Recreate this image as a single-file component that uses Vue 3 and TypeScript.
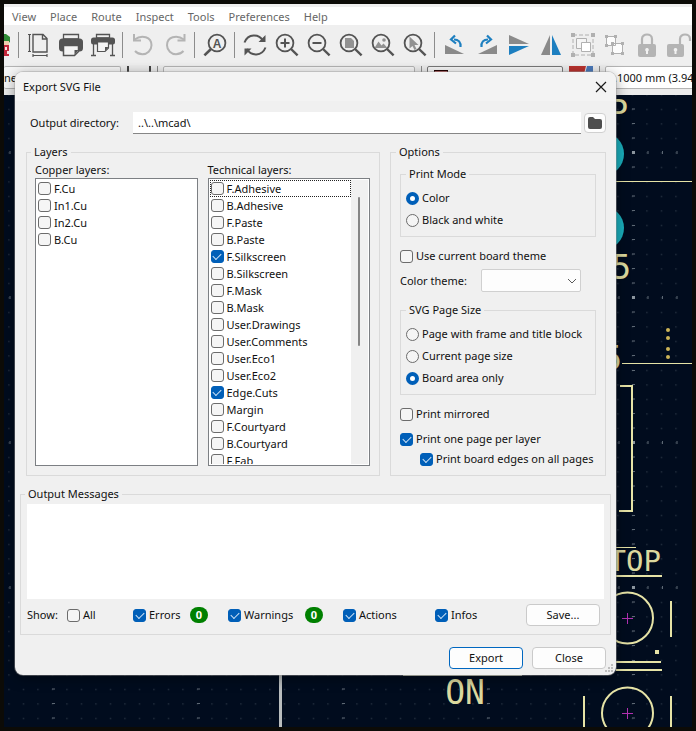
<script setup lang="ts">
import { ref } from 'vue'

interface Layer {
  name: string
  on: boolean
}

const menus = ['View', 'Place', 'Route', 'Inspect', 'Tools', 'Preferences', 'Help']

const lens =
  '<circle cx="11" cy="10" r="8.4" fill="none" stroke="#545454" stroke-width="1.8"/><path d="M17 16l6.6 6.4" stroke="#545454" stroke-width="2.4"/>'

const icons: Record<string, string> = {
  'Page settings':
    '<path d="M7 1.5h10l4 4v13.500H7zM16.500 1.500v4.500H21" fill="none" stroke="#545454" stroke-width="1.400"/><path d="M3.500 1.500v17M2 1.500h3M2 18.500h3M7 22.500h14M7 21v3M21 21v3" stroke="#545454" stroke-width="1.200"/>',
  Print:
    '<path d="M5.500 1.500h15V6h-15z" fill="#f0f0f0" stroke="#545454" stroke-width="1.300"/><rect x="1" y="5.500" width="24" height="13" rx="3.500" fill="#545454"/><path d="M5.500 12.500h15v6l-4 4h-11z" fill="#f4f4f4" stroke="#545454" stroke-width="1.500"/><path d="M20.500 17h-4v5z" fill="#545454"/>',
  Plot:
    '<path d="M6.500 1.500h13V5h-13z" fill="#f0f0f0" stroke="#545454" stroke-width="1.300"/><rect x="1" y="4.500" width="24" height="7" rx="2.500" fill="#545454"/><path d="M3.500 11v12M22.500 11v12M1 22.500h5M20 22.500h5" stroke="#545454" stroke-width="1.300"/><path d="M7.500 9h11v6l-3.500 3.500H7.500z" fill="#f4f4f4" stroke="#545454" stroke-width="1.200"/><path d="M18.500 14H15v4z" fill="#545454"/>',
  Undo:
    '<path d="M4.500 6.500C12 1 21.500 4 21.500 12.200c0 5.200-4.500 9-9 9-3.200 0-5.500-1-7.500-3.200" fill="none" stroke="#b4b4b4" stroke-width="2"/><path d="M4 1v6.500h7" fill="none" stroke="#b4b4b4" stroke-width="2"/>',
  Redo:
    '<path d="M22 6.500C14.500 1 5 4 5 12.200c0 5.200 4.500 9 9 9 3.200 0 5.500-1 7.500-3.200" fill="none" stroke="#b4b4b4" stroke-width="2"/><path d="M22.500 1v6.500h-7" fill="none" stroke="#b4b4b4" stroke-width="2"/>',
  Find:
    '<circle cx="15" cy="10" r="8.400" fill="none" stroke="#545454" stroke-width="1.800"/><path d="M9 16l-6.600 6.400" stroke="#545454" stroke-width="2.600"/><text x="15" y="14.500" text-anchor="middle" font-family="Liberation Sans, sans-serif" font-weight="bold" font-size="12" fill="#545454">A</text>',
  Refresh:
    '<path d="M2.500 9.500C6 .5 17 .5 21 8M23.500 14.500c-3.500 9-14.500 9-18.500 1.500" fill="none" stroke="#545454" stroke-width="2"/><path d="M23.500 2v7h-7zM2.500 22.500v-7h7z" fill="#545454"/>',
  'Zoom in': lens + '<path d="M6.500 10h9M11 5.500v9" stroke="#545454" stroke-width="2"/>',
  'Zoom out': lens + '<path d="M6.500 10h9" stroke="#545454" stroke-width="2"/>',
  'Zoom to page': lens + '<path d="M7 5h6l3 3v7H7z" fill="#929292"/>',
  'Zoom to objects':
    lens + '<path d="M4.500 15l4-6.500 3 4 2-2 4 4.500z" fill="#929292"/><circle cx="14" cy="7" r="1.800" fill="#929292"/>',
  'Zoom to selection': lens + '<path d="M7.500 3.500v12l3-2.500 2 4 2-1-2-4h4z" fill="#929292"/>',
  'Rotate left':
    '<path d="M3 12l19 9H3z" fill="#8a8a8a"/><path d="M18.500 14c.5-5-2-7.500-6.500-7.500" fill="none" stroke="#1d7fc0" stroke-width="2.200"/><path d="M13 2.500L9 6.500l5 4" fill="none" stroke="#1d7fc0" stroke-width="2.200"/>',
  'Rotate right':
    '<path d="M23 12v9H4z" fill="#8a8a8a"/><path d="M7.500 14C7 9 9.500 6.500 14 6.500" fill="none" stroke="#1d7fc0" stroke-width="2.200"/><path d="M13 2.500l4 4-5 4" fill="none" stroke="#1d7fc0" stroke-width="2.200"/>',
  'Flip vertically': '<path d="M3 2l20 9H3z" fill="#8a8a8a"/><path d="M3 13h20L3 22z" fill="#1d7fc0"/>',
  'Flip horizontally': '<path d="M12 2v20H3z" fill="#8a8a8a"/><path d="M14 2v20h9z" fill="#1d7fc0"/>',
  Group:
    '<rect x="3" y="2" width="20" height="20" fill="none" stroke="#b0b0b0" stroke-dasharray="4 2"/><path d="M1 0h4v4H1zM21 0h4v4h-4zM1 20h4v4H1zM21 20h4v4h-4z" fill="#b0b0b0"/><path d="M6.500 5.500h10v10h-10z" fill="#f5f5f5" stroke="#b0b0b0"/><path d="M11.500 9.500h9v9h-9z" fill="#fff" stroke="#b0b0b0"/>',
  Ungroup:
    '<path d="M4.500 3.500h9v9h-9zM10.500 10.500h10v10h-10z" fill="#fcfcfc" stroke="#b0b0b0"/><path d="M3 2h3v3H3zM12 2h3v3h-3zM3 11h3v3H3zM9 9h3v3H9zM19 9h3v3h-3zM9 19h3v3H9zM19 19h3v3h-3z" fill="#b0b0b0"/>',
  Lock:
    '<rect x="4" y="11" width="18" height="13" rx="2" fill="#b4b4b4"/><path d="M8 11V6c0-6 10-6 10 0v5" fill="none" stroke="#b4b4b4" stroke-width="2.200"/><path d="M13 15a1.800 1.800 0 011 3.300V21h-2v-2.700A1.800 1.800 0 0113 15z" fill="#f2f2f2"/>',
  Unlock:
    '<rect x="1" y="11" width="17" height="13" rx="2" fill="#b4b4b4"/><path d="M14 11V6c0-6 10-6 10 0v2" fill="none" stroke="#b4b4b4" stroke-width="2.200"/><path d="M9.500 15a1.800 1.800 0 011 3.300V21h-2v-2.700A1.800 1.800 0 019.500 15z" fill="#f2f2f2"/>',
}

const groups: string[][] = [
  ['Page settings', 'Print', 'Plot'],
  ['Undo', 'Redo'],
  ['Find'],
  ['Refresh', 'Zoom in', 'Zoom out', 'Zoom to page', 'Zoom to objects', 'Zoom to selection'],
  ['Rotate left', 'Rotate right', 'Flip vertically', 'Flip horizontally', 'Group', 'Ungroup', 'Lock', 'Unlock'],
]

const copper = ref<Layer[]>(['F.Cu', 'In1.Cu', 'In2.Cu', 'B.Cu'].map((name) => ({ name, on: false })))

const technical = ref<Layer[]>(
  [
    'F.Adhesive', 'B.Adhesive', 'F.Paste', 'B.Paste', 'F.Silkscreen', 'B.Silkscreen', 'F.Mask', 'B.Mask',
    'User.Drawings', 'User.Comments', 'User.Eco1', 'User.Eco2', 'Edge.Cuts', 'Margin', 'F.Courtyard',
    'B.Courtyard', 'F.Fab',
  ].map((name) => ({ name, on: name === 'F.Silkscreen' || name === 'Edge.Cuts' })),
)

const directory = ref('..\\..\\mcad\\')
const printMode = ref('Color')
const pageSize = ref('Board area only')
const boardTheme = ref(false)
const theme = ref('')
const mirrored = ref(false)
const onePage = ref(true)
const allEdges = ref(true)
const messages = ref('')
const show = ref({ all: false, errors: true, warnings: true, actions: true, infos: true })

const dots = [330, 338, 349, 357]
const pads = [154, 228]
const vias = [618, 713]
</script>

<template>
  <div class="app">
    <nav class="menubar">
      <button v-for="m in menus" :key="m" type="button">{{ m }}</button>
    </nav>

    <div class="toolbar">
      <svg class="cut-icon" width="6" height="24" aria-hidden="true">
        <path d="M0 1h2l4 3v5l-3 2H0z" fill="#2e8b35" />
        <path d="M0 8h5v4H0z" fill="#f0cfae" />
        <path d="M0 12h5v11H0z" fill="#c3273b" />
        <path d="M1 14h2v3H1zM3 18h2v3H3z" fill="#f6e4df" />
      </svg>
      <template v-for="(g, i) in groups" :key="i">
        <span class="sep"></span>
        <button v-for="name in g" :key="name" type="button" :aria-label="name">
          <svg width="24" height="24" viewBox="0 0 24 24" v-html="icons[name]"></svg>
        </button>
      </template>
    </div>

    <div class="subbar">
      <span class="box track">ne</span>
      <span class="ticks"></span>
      <span class="sep"></span>
      <span class="box via"></span>
      <span class="sep"></span>
      <span class="box dark"><i></i></span>
      <svg class="pair" width="24" height="20" aria-hidden="true">
        <path d="M0 0h17l-5 20H0z" fill="#b8322e" />
        <path d="M18 0h6v20H13z" fill="#4a78b8" />
      </svg>
      <span class="sep"></span>
      <span class="box grid">.1000 mm (3.94</span>
    </div>

    <main class="canvas">
      <svg width="100%" height="100%" aria-hidden="true">
        <defs>
          <pattern id="minor" x="1.5" y="0.5" width="14.5" height="14.5" patternUnits="userSpaceOnUse">
            <rect x="7" y="7" width="1" height="1" fill="#465260" />
          </pattern>
          <pattern id="major" x="-19" y="80" width="145" height="145" patternUnits="userSpaceOnUse">
            <path
              d="M71 14.500h3M71 29h3M71 43.500h3M71 58h3M71 87h3M71 101.500h3M71 116h3M71 130.500h3M71 0.500h3"
              stroke="#5d6874"
            />
            <path
              d="M14.500 71v3M29 71v3M43.500 71v3M58 71v3M87 71v3M101.500 71v3M116 71v3M130.500 71v3M0.500 71v3"
              stroke="#5d6874"
            />
            <rect x="71" y="71" width="3" height="3" fill="#8b959e" />
          </pattern>
        </defs>
        <g transform="translate(-4 -95)">
          <rect x="0" y="95" width="100%" height="100%" fill="url(#minor)" />
          <rect x="0" y="95" width="100%" height="100%" fill="url(#major)" />
          <circle v-for="y in pads" :key="y" cx="602" :cy="y" r="22" fill="#1aaebc" />
          <g fill="none" stroke="#e6e3a6" stroke-width="2">
            <path d="M616 181.500h80M622 363.500h74M616 547.500h20" stroke-width="1" />
            <path d="M620 386h12v125h-13M616 576h46M616 662h45M616 670h46M671 601v36M671 696v40M584 696v40" />
            <circle v-for="y in vias" :key="y" cx="627.500" :cy="y" r="25.500" />
          </g>
          <path
            v-for="y in vias"
            :key="'x' + y"
            :d="`M622 ${y + 0.5}h11M627.5 ${y - 5}v11`"
            stroke="#b030b0"
            stroke-width="1"
          />
          <path d="M655 650h4v4h-4z" fill="#e6e3a6" />
          <path d="M403 675h119" stroke="#b5b9aa" stroke-width="2" />
          <path d="M280.500 672v60" stroke="#b9bdbe" stroke-width="3" />
          <circle v-for="y in dots" :key="'d' + y" cx="668" :cy="y" r="2" fill="#cdb558" />
          <g class="silk">
            <text x="628" y="124" font-size="33" text-anchor="end">P</text>
            <text x="631" y="279" font-size="33" text-anchor="end">5</text>
            <text x="622" y="370" font-size="33" text-anchor="end">5</text>
            <text x="661" y="571" font-size="29" text-anchor="end">TOP</text>
            <text x="465" y="704" font-size="33" text-anchor="middle">ON</text>
          </g>
        </g>
      </svg>
    </main>

    <section class="dialog" role="dialog" aria-labelledby="title">
      <header>
        <h1 id="title">Export SVG File</h1>
        <button type="button" class="close" aria-label="Close window">
          <svg width="12" height="12"><path d="M1 1l10 10M11 1L1 11" stroke="#1a1a1a" stroke-width="1.200" /></svg>
        </button>
      </header>

      <form @submit.prevent>
        <div class="path-row">
          <label for="dir">Output directory:</label>
          <input id="dir" v-model="directory" type="text" />
          <button type="button" aria-label="Browse">
            <svg width="14" height="12">
              <path d="M0 2q0-2 2-2h3l2 2h5q2 0 2 2v6q0 2-2 2H2q-2 0-2-2z" fill="#4e4e4e" />
            </svg>
          </button>
        </div>

        <div class="panels">
          <fieldset class="layers">
            <legend>Layers</legend>
            <div class="column">
              <span class="caption">Copper layers:</span>
              <div class="list">
                <div class="rows">
                  <label v-for="l in copper" :key="l.name"><input v-model="l.on" type="checkbox" />{{ l.name }}</label>
                </div>
              </div>
            </div>
            <div class="column">
              <span class="caption">Technical layers:</span>
              <div class="list">
                <div class="rows">
                  <label v-for="(l, i) in technical" :key="l.name" :class="{ focused: i === 0 }">
                    <input v-model="l.on" type="checkbox" />{{ l.name }}
                  </label>
                </div>
                <div class="scroll"><span></span></div>
              </div>
            </div>
          </fieldset>

          <fieldset class="options">
            <legend>Options</legend>
            <fieldset class="inner">
              <legend>Print Mode</legend>
              <label v-for="m in ['Color', 'Black and white']" :key="m">
                <input v-model="printMode" type="radio" name="mode" :value="m" />{{ m }}
              </label>
            </fieldset>
            <label class="use-theme"><input v-model="boardTheme" type="checkbox" />Use current board theme</label>
            <div class="theme-row">
              <label for="theme">Color theme:</label>
              <span class="select">
                <select id="theme" v-model="theme"><option value=""></option></select>
                <svg width="10" height="6"><path d="M1 1l4 4 4-4" fill="none" stroke="#5a5a5a" /></svg>
              </span>
            </div>
            <fieldset class="inner">
              <legend>SVG Page Size</legend>
              <label v-for="p in ['Page with frame and title block', 'Current page size', 'Board area only']" :key="p">
                <input v-model="pageSize" type="radio" name="size" :value="p" />{{ p }}
              </label>
            </fieldset>
            <label class="mirror"><input v-model="mirrored" type="checkbox" />Print mirrored</label>
            <label class="one-page"><input v-model="onePage" type="checkbox" />Print one page per layer</label>
            <label class="edges"><input v-model="allEdges" type="checkbox" />Print board edges on all pages</label>
          </fieldset>
        </div>

        <fieldset class="messages">
          <legend>Output Messages</legend>
          <textarea v-model="messages" aria-label="Output Messages" readonly></textarea>
          <div class="show">
            <span>Show:</span>
            <label><input v-model="show.all" type="checkbox" />All</label>
            <label><input v-model="show.errors" type="checkbox" />Errors</label>
            <b>0</b>
            <label><input v-model="show.warnings" type="checkbox" />Warnings</label>
            <b>0</b>
            <label><input v-model="show.actions" type="checkbox" />Actions</label>
            <label><input v-model="show.infos" type="checkbox" />Infos</label>
            <button type="button" class="btn">Save...</button>
          </div>
        </fieldset>

        <footer>
          <button type="submit" class="btn primary">Export</button>
          <button type="button" class="btn">Close</button>
        </footer>
      </form>
      <svg class="grip" width="8" height="8" aria-hidden="true">
        <path d="M6 0h2v2H6zM3 3h2v2H3zM6 3h2v2H6zM0 6h2v2H0zM3 6h2v2H3zM6 6h2v2H6z" fill="#bdbdbd" />
      </svg>
    </section>
  </div>
</template>

<style>
body {
  margin: 0;
  padding: 4px;
  box-sizing: border-box;
  min-height: 100vh;
  display: flex;
  background: #0c0b07;
}
#app {
  flex: 1;
  display: flex;
  min-width: 0;
}
</style>

<style scoped>
.app {
  position: relative;
  flex: 1;
  min-width: 0;
  display: flex;
  flex-direction: column;
  overflow: hidden;
  background: #efefef;
  color: #111;
  font: 11px/16px 'Noto Sans', 'Open Sans', sans-serif;
}
.app * {
  box-sizing: border-box;
}
button,
input,
select,
textarea {
  margin: 0;
  padding: 0;
  border: 0;
  background: none;
  color: inherit;
  font: inherit;
}
svg {
  display: block;
}

.menubar {
  display: flex;
  gap: 14px;
  margin-top: 3px;
  padding: 2px 8px 0;
  background: #fff;
}
.menubar button {
  color: #666;
}
.toolbar {
  display: flex;
  align-items: center;
  gap: 8px;
  height: 40px;
}
.toolbar button,
.toolbar button svg {
  flex: none;
  overflow: visible;
}
.cut-icon {
  flex: none;
}
.sep {
  flex: none;
  width: 1px;
  height: 26px;
  margin-right: -1px;
  background: #8c8c8c;
}
.subbar {
  display: flex;
  gap: 6px;
  height: 30px;
  padding-top: 1px;
  background: #ececec;
  white-space: nowrap;
}
.box {
  flex: none;
  height: 23px;
  padding-top: 3px;
  border: 1px solid #b4b4b4;
  border-radius: 2px;
  background: #f6f6f6;
}
.track {
  width: 117px;
  border-left: 0;
}
.ticks {
  flex: none;
  width: 24px;
  height: 12px;
  border: solid #444;
  border-width: 0 2px;
}
.via {
  width: 252px;
}
.dark {
  width: 136px;
  border-color: #777;
}
.dark i {
  display: block;
  width: 14px;
  height: 12px;
  margin-left: 6px;
  border: 1px solid #200;
  background: #a44;
}
.pair {
  flex: none;
}
.grid {
  width: 160px;
  padding-left: 8px;
  background: #fff;
}

.canvas {
  position: relative;
  flex: 1;
  min-height: 560px;
  background: #010c1e;
}
.canvas > svg {
  position: absolute;
  inset: 0;
}
.silk {
  fill: #dcd99e;
  font-family: 'DejaVu Sans Mono', monospace;
}

.dialog {
  position: absolute;
  top: 68px;
  left: 11px;
  right: 76px;
  border-radius: 8px;
  background: #f0f0f0;
  box-shadow: 0 0 0 1px #9a9a9a66, 0 3px 14px #0006;
}
header {
  display: flex;
  align-items: center;
  justify-content: space-between;
  height: 29px;
  padding: 0 9px 0 8px;
  border-radius: 8px 8px 0 0;
  background: #f3f3f3;
}
h1 {
  margin: 0;
  font: inherit;
}
form {
  display: flex;
  flex-direction: column;
  padding: 11px 5px 6px;
}
.path-row {
  display: grid;
  grid-template-columns: 100px 1fr 22px;
  gap: 3px;
  align-items: center;
  padding: 0 5px 0 10px;
}
.path-row input {
  height: 22px;
  min-width: 0;
  padding-left: 5px;
  border-bottom: 1px solid #868686;
  background: #fff;
}
.path-row button {
  display: grid;
  place-items: center;
  height: 20px;
  border: 1px solid #d0d0d0;
  border-radius: 4px;
  background: #fdfdfd;
}

fieldset {
  min-width: 0;
  margin: 0;
  border: 1px solid #dadada;
}
legend {
  margin: 0;
  padding: 0 3px;
}
label {
  display: flex;
  align-items: center;
  gap: 3px;
  white-space: nowrap;
}
input[type='checkbox'],
input[type='radio'] {
  appearance: none;
  flex: none;
  width: 13px;
  height: 13px;
  border: 1px solid #6c6c6c;
  border-radius: 3px;
  background: #f5f5f5;
}
input[type='radio'] {
  border-radius: 50%;
}
input[type='checkbox']:checked {
  display: grid;
  place-items: center;
  border-color: #005fb8;
  background: #005fb8;
}
input[type='checkbox']:checked::before {
  content: '';
  width: 7px;
  height: 4px;
  margin-bottom: 2px;
  border: solid #cfe4f7;
  border-width: 0 0 1px 1px;
  transform: rotate(-45deg);
}
input[type='radio']:checked {
  border: 4px solid #005fb8;
  background: #fff;
}

.panels {
  display: grid;
  grid-template-columns: 354fr 216fr;
  gap: 10px;
  margin-top: 10px;
  padding: 0 5px 0 6px;
}
.layers {
  display: grid;
  grid-template-columns: 1fr 1fr;
  gap: 10px;
  padding: 2px 9px 8px 8px;
}
.layers legend,
.options > legend {
  margin-left: -4px;
}
.column {
  min-width: 0;
}
.caption {
  display: block;
}
.list {
  display: flex;
  height: 288px;
  padding: 1px;
  border: 1px solid #7c7f83;
  background: #fff;
  overflow: hidden;
}
.rows {
  flex: 1;
  overflow: hidden;
}
.rows label {
  height: 17px;
  padding-left: 1px;
}
.rows .focused {
  padding-left: 0;
  border: 1px dotted #222;
}
.scroll {
  width: 17px;
  padding: 17px 7px;
  background: #f0f0f0;
}
.scroll span {
  display: block;
  width: 2px;
  height: 149px;
  border-radius: 1px;
  background: #868686;
}
.options {
  padding: 6px 9px 8px;
}
.inner {
  padding: 5px;
}
.inner label {
  height: 22px;
}
.use-theme {
  margin-top: 11px;
}
.theme-row {
  display: flex;
  align-items: center;
  justify-content: space-between;
  margin: 5px 15px 10px 0;
}
.select {
  display: grid;
  width: 100px;
  align-items: center;
}
.select > * {
  grid-area: 1 / 1;
}
.select svg {
  justify-self: end;
  margin-right: 4px;
  pointer-events: none;
}
select {
  appearance: none;
  width: 100%;
  height: 23px;
  border: 1px solid #d0d0d0;
  border-radius: 2px;
  background: #fdfdfd;
}
.mirror {
  margin-top: 11px;
}
.one-page {
  margin-top: 9px;
}
.edges {
  margin: 4px 0 0 20px;
}

.messages {
  margin-top: 10px;
  padding: 2px 6px 8px;
}
.messages legend {
  margin-left: -2px;
}
textarea {
  display: block;
  width: 100%;
  height: 95px;
  resize: none;
  background: #fff;
}
.show {
  display: grid;
  grid-template-columns: 40px 66px 57px 38px 77px 38px 92px 1fr 74px;
  align-items: center;
  margin: 5px 4px 0 0;
}
.show b {
  width: 18px;
  border-radius: 8px;
  background: #008000;
  color: #fff;
  text-align: center;
}
.btn {
  width: 74px;
  height: 22px;
  border: 1px solid #cacaca;
  border-radius: 4px;
  background: #fdfdfd;
  text-align: center;
}
.primary {
  border-color: #0067c0;
}
footer {
  display: flex;
  justify-content: flex-end;
  gap: 9px;
  margin-top: 12px;
  padding-right: 5px;
}
.grip {
  position: absolute;
  right: 3px;
  bottom: 3px;
}
</style>
